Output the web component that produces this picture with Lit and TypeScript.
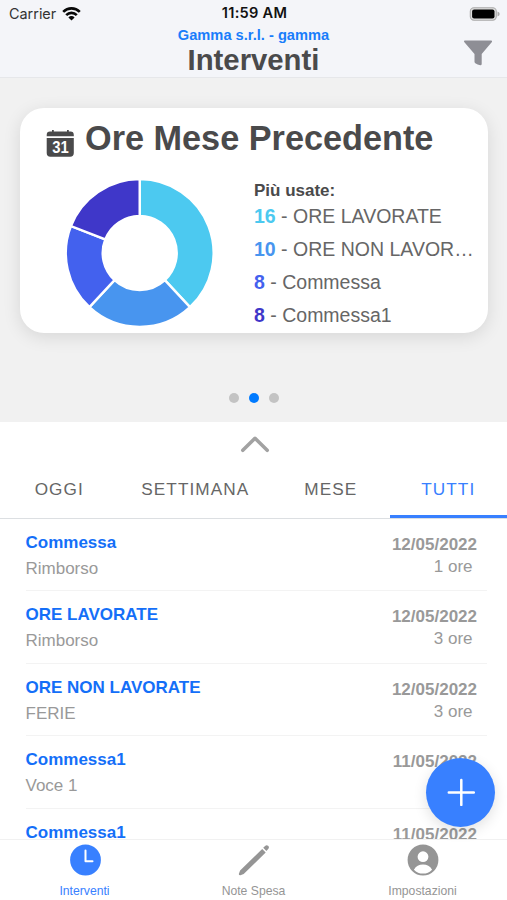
import { LitElement, html, svg, css } from "lit";
import { customElement } from "lit/decorators.js";
import { classMap } from "lit/directives/class-map.js";

const SLICES = [
  { value: 16, label: "ORE LAVORATE", color: "#4cc9f0" },
  { value: 10, label: "ORE NON LAVORATE", color: "#4895ef" },
  { value: 8, label: "Commessa", color: "#4361ee" },
  { value: 8, label: "Commessa1", color: "#3f37c9" },
];

const ROWS = [
  { title: "Commessa", note: "Rimborso", date: "12/05/2022", hours: "1 ore" },
  { title: "ORE LAVORATE", note: "Rimborso", date: "12/05/2022", hours: "3 ore" },
  { title: "ORE NON LAVORATE", note: "FERIE", date: "12/05/2022", hours: "3 ore" },
  { title: "Commessa1", note: "Voce 1", date: "11/05/2022", hours: "" },
  { title: "Commessa1", note: "", date: "11/05/2022", hours: "" },
];

@customElement("status-header")
class StatusHeader extends LitElement {
  static styles = css`
    :host { display: block; height: 78px; background: #f4f5f9; border-bottom: 1px solid #e6e7ea; box-sizing: border-box; }
    .status { display: grid; grid-template-columns: 1fr auto 1fr; height: 27px; padding: 0 7px 0 9px; align-items: center; font: 500 14.5px/27px Inter, sans-serif; color: #111; }
    .carrier { display: flex; align-items: center; gap: 6px; font-weight: 400; font-size: 14.4px; color: #333; }
    .time { font-weight: 600; font-size: 14.6px; letter-spacing: 0.25px; }
    .battery { justify-self: end; display: block; }
    .bar { display: grid; grid-template-columns: 1fr auto 1fr; }
    .titles { grid-column: 2; text-align: center; }
    .company { font: bold 14.65px/16px "Liberation Sans", sans-serif; color: #197dfb; }
    .title { font: bold 29.3px/34px "Liberation Sans", sans-serif; color: #4a4a4b; }
    .filter { justify-self: end; margin: 13px 13.7px 0 0; }
  `;
  render() {
    return html`
      <div class="status">
        <span class="carrier">Carrier
          <svg width="19" height="14" viewBox="0 0 19 14" fill="none" stroke="#080808" stroke-width="2.6">
            <path d="M1.2 4.8a11.8 11.8 0 0 1 16.6 0M4.2 8.1a7.5 7.5 0 0 1 10.6 0" />
            <path d="M6.4 10.4a4.4 4.4 0 0 1 6.2 0L9.5 13.5z" fill="#080808" stroke="none" />
          </svg>
        </span>
        <span class="time">11:59 AM</span>
        <svg class="battery" width="31" height="14" viewBox="0 0 31 14">
          <rect x="1.3" y=".8" width="26" height="12.4" rx="3.6" fill="#ddd" stroke="#aaa" stroke-width="1.1" />
          <rect x="3.1" y="2.4" width="22.4" height="9.2" rx="2" fill="#000" />
          <path d="M28.5 4.5v5q2.2-.7 2.2-2.5t-2.2-2.5" fill="#aaa" />
        </svg>
      </div>
      <div class="bar">
        <div class="titles">
          <div class="company">Gamma s.r.l. - gamma</div>
          <div class="title">Interventi</div>
        </div>
        <svg class="filter" width="30" height="26" viewBox="0 0 30 26">
          <path d="M1.8.5h26.4q1.4.2.7 1.5L18.7 14v10q-.1 1.3-1.4 1.2-2.8-.4-5-1.9-.8-.6-.8-1.5V14L1.2 2Q.4.7 1.8.5" fill="#8e8e95" />
        </svg>
      </div>
    `;
  }
}

@customElement("donut-chart")
class DonutChart extends LitElement {
  static styles = css`
    :host { display: block; width: 148px; height: 148px; }
    .chart { display: block; }
  `;
  render() {
    const total = SLICES.reduce((sum, s) => sum + s.value, 0);
    const at = (r: number, v: number) => {
      const a = (v / total) * Math.PI * 2;
      return `${73.7 + r * Math.sin(a)} ${74 - r * Math.cos(a)}`;
    };
    let start = 0;
    const arcs = SLICES.map((s) => {
      const from = start;
      start += s.value;
      return svg`<path d="M${at(73.9, from)}A73.9 73.9 0 0 1 ${at(73.9, start)}L${at(37, start)}A37 37 0 0 0 ${at(37, from)}Z" fill=${s.color} stroke="#fff" stroke-width="2.4" />`;
    });
    return html`<svg class="chart" width="148" height="148" viewBox="0 0 148 148">${arcs}</svg>`;
  }
}

@customElement("hours-card")
class HoursCard extends LitElement {
  static styles = css`
    :host { display: block; height: 225px; box-sizing: border-box; margin: 0 19px 0 20px; border-radius: 24px; background: #fff; box-shadow: 0 4px 18px rgba(0, 0, 0, 0.11); overflow: hidden; font-family: "Liberation Sans", sans-serif; }
    .heading { display: flex; align-items: flex-start; height: 71px; padding-left: 26px; gap: 10px; }
    .calendar { margin-top: 21px; flex: none; }
    .name { font: bold 34.25px/40px "Liberation Sans", sans-serif; color: #4a4a4b; margin-top: 10px; white-space: nowrap; }
    .body { display: flex; padding-left: 46px; }
    .legend { margin-left: 40px; width: 221px; padding-top: 2px; }
    .caption { font-weight: bold; font-size: 17px; line-height: 20px; color: #4a4a4b; }
    .entry { font-size: 19.5px; line-height: 33px; color: #666; white-space: nowrap; overflow: hidden; text-overflow: ellipsis; }
    .entries { margin-top: -1px; }
    .value { font-weight: bold; }
    .day { font: bold 16.5px "Liberation Sans", sans-serif; }
  `;
  render() {
    return html`
      <div class="heading">
        <svg class="calendar" width="29" height="29" viewBox="0 0 29 29">
          <path d="M.7 7.2V6Q.7 2.6 4 2.6h2V.9h1.8v1.7h13.2V.9h1.8v1.7h1.7q3.3 0 3.3 3.4v1.2zM.7 9h27.1v15q0 3.7-3.7 3.7H4.4Q.7 27.7.7 24z" fill="#4a4a4b" />
          <text class="day" x="14.6" y="24" text-anchor="middle" textLength="16.5" lengthAdjust="spacingAndGlyphs" fill="#fff">31</text>
        </svg>
        <div class="name">Ore Mese Precedente</div>
      </div>
      <div class="body">
        <donut-chart></donut-chart>
        <div class="legend">
          <div class="caption">Più usate:</div>
          <div class="entries">
            ${SLICES.map((s) => html`<div class="entry"><span class="value" style="color:${s.color}">${s.value}</span> - ${s.label}</div>`)}
          </div>
        </div>
      </div>
    `;
  }
}

@customElement("range-tabs")
class RangeTabs extends LitElement {
  static styles = css`
    :host { display: grid; grid-template-columns: 118.5px 153.5px 117.5px 1fr; height: 60px; box-sizing: border-box; border-bottom: 1px solid #dcdfe2; font: 17.2px/60px "Liberation Sans", sans-serif; letter-spacing: 1.05px; color: #666; }
    .tab { text-align: center; height: 59px; box-sizing: border-box; }
    .active { color: #3880ff; border-bottom: 3px solid #3880ff; }
  `;
  render() {
    return html`${["OGGI", "SETTIMANA", "MESE", "TUTTI"].map(
      (t) => html`<div class=${classMap({ tab: true, active: t === "TUTTI" })}>${t}</div>`
    )}`;
  }
}

@customElement("work-list")
class WorkList extends LitElement {
  static styles = css`
    :host { display: block; overflow: hidden; font: 17px/22px "Liberation Sans", sans-serif; color: #999; }
    .row { display: flex; justify-content: space-between; height: 72.4px; box-sizing: border-box; margin: 0 20px 0 25.5px; padding: 13px 10px 0 0; border-bottom: 1px solid #f3f3f3; }
    .title { font-weight: bold; color: #146ff8; }
    .note { margin-top: 4px; }
    .side { padding-top: 2px; text-align: right; }
    .date { font-weight: bold; }
    .hours { padding-right: 4.5px; }
  `;
  render() {
    return html`${ROWS.map(
      (r) => html`<div class="row">
        <div><div class="title">${r.title}</div><div class="note">${r.note}</div></div>
        <div class="side"><div class="date">${r.date}</div><div class="hours">${r.hours}</div></div>
      </div>`
    )}`;
  }
}

@customElement("bottom-nav")
class BottomNav extends LitElement {
  static styles = css`
    :host { display: grid; grid-template-columns: repeat(3, 1fr); height: 61px; box-sizing: border-box; border-top: 1px solid #f1f1f1; background: #fff; font: 12.2px/16px "Liberation Sans", sans-serif; color: #959595; }
    .item { display: flex; flex-direction: column; align-items: center; padding-top: 4px; gap: 7px; }
    .active { color: #3880ff; }
  `;
  render() {
    return html`
      <div class="item active">
        <svg width="32" height="32" viewBox="0 0 32 32"><circle cx="16.5" cy="16" r="15.4" fill="#3880ff" /><path d="M16.5 6.5v10.7h7" fill="none" stroke="#fff" stroke-width="2" stroke-linecap="round" stroke-linejoin="round" /></svg>
        <span>Interventi</span>
      </div>
      <div class="item">
        <svg width="32" height="32" viewBox="0 0 32 32" fill="#959595"><path d="M24.2 4.9l3.5 3.5L5.7 30.1l-3.3 1.2q-1.8.2-1.5-1.5l1.2-3.2zM25.2 3.8l1.9-1.9q1.5-1.4 3-.1t.3 3l-2 2.2z" /></svg>
        <span>Note Spesa</span>
      </div>
      <div class="item">
        <svg width="32" height="32" viewBox="0 0 32 32"><circle cx="16" cy="16" r="15.4" fill="#959595" /><circle cx="16" cy="12.7" r="5.4" fill="#fff" /><path d="M6.9 25.7Q10 20.6 16 20.6t9.1 5.1q-3.8 3.9-9.1 3.9t-9.1-3.9" fill="#fff" /></svg>
        <span>Impostazioni</span>
      </div>
    `;
  }
}

@customElement("app-root")
class AppRoot extends LitElement {
  static styles = css`
    :host { display: grid; grid-template-rows: 78px 344px 37px 60px 320px 61px; width: 507px; height: 900px; overflow: hidden; background: #fff; position: relative; }
    .hero { background: #f1f1f1; padding-top: 30px; display: flex; flex-direction: column; box-sizing: border-box; }
    .dots { display: flex; justify-content: center; gap: 9.7px; margin-top: 60px; padding-left: 1px; }
    .dot { width: 10px; height: 10px; border-radius: 50%; background: #c3c3c3; }
    .on { background: #007aff; }
    .handle { display: flex; justify-content: center; padding: 12px 0 0 2px; }
    .fab { position: absolute; right: 12px; bottom: 73.5px; width: 69px; height: 69px; border-radius: 50%; background: #3880ff; display: grid; place-items: center; box-shadow: 0 4px 14px rgba(0, 0, 0, 0.12); }
  `;
  render() {
    return html`
      <status-header></status-header>
      <div class="hero">
        <hours-card></hours-card>
        <div class="dots"><i class="dot"></i><i class="dot on"></i><i class="dot"></i></div>
      </div>
      <div class="handle">
        <svg width="30" height="20" viewBox="0 0 30 20"><path d="M2.8 16.3 15 4.3l12.2 12" fill="none" stroke="#a2a2a2" stroke-width="3.6" stroke-linecap="round" stroke-linejoin="round" /></svg>
      </div>
      <range-tabs></range-tabs>
      <work-list></work-list>
      <bottom-nav></bottom-nav>
      <div class="fab">
        <svg width="28" height="28" viewBox="0 0 28 28"><path d="M14.3 2v25M1.8 14.5h25" stroke="#fff" stroke-width="2.5" stroke-linecap="round" /></svg>
      </div>
    `;
  }
}
